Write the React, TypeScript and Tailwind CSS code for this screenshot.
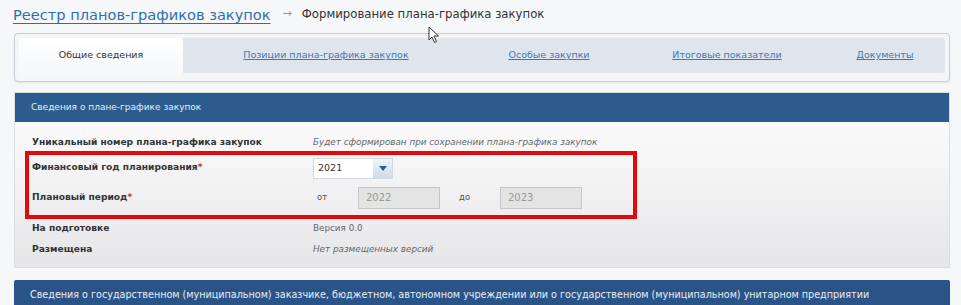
import React from 'react'

const font = { fontFamily: '"DejaVu Sans", Verdana, sans-serif' }

const tabs = [
  { label: 'Общие сведения', w: 'w-[164px]', active: true },
  { label: 'Позиции плана-графика закупок', w: 'w-[286px]' },
  { label: 'Особые закупки', w: 'w-[160px]' },
  { label: 'Итоговые показатели', w: 'w-[196px]' },
  { label: 'Документы', w: 'w-[120px]' },
]

function Cursor() {
  return (
    <svg className="absolute left-[428px] top-[26px]" width="13" height="18" viewBox="0 0 13 18">
      <path d="M1 1 L1 14 L4 11 L6.5 16.5 L8.5 15.5 L6 10 L10.5 10 Z" fill="#fff" stroke="#333" strokeWidth="1" strokeLinejoin="round" />
    </svg>
  )
}

function Row({ label, required, children, className = '' }: { label: string; required?: boolean; children?: React.ReactNode; className?: string }) {
  return (
    <div className={`grid grid-cols-[281px_1fr] items-center ${className}`}>
      <div className="text-[9.1px] font-bold text-[#333]">
        {label}
        {required && <span className="text-[#d22]">*</span>}
      </div>
      <div className="text-[8.8px] text-[#666]">{children}</div>
    </div>
  )
}

export default function App() {
  return (
    <div className="relative min-h-[305px] w-[961px] overflow-hidden bg-[#f6f7f8] pl-[14px] pr-[11px]" style={font}>
      <Cursor />
      {/* breadcrumbs */}
      <div className="flex h-[33px] items-center pb-[4px]">
        <a className="-ml-[1px] text-[14.6px] text-[#2f6db3] underline decoration-1 underline-offset-[3px]">Реестр планов-графиков закупок</a>
        <span className="ml-[12px] text-[11px] text-[#999]">→</span>
        <span className="ml-[10px] text-[11.7px] text-[#333]">Формирование плана-графика закупок</span>
      </div>

      {/* tabs */}
      <div className="rounded-[4px] border border-[#c7ced6] bg-[#f3f5f7] px-[4px] pt-[4px] pb-[8px] shadow-[0_1px_2px_rgba(0,0,0,0.08)]">
        <div className="flex h-[35px] rounded-[3px] bg-[#dfe5ec]">
          {tabs.map((t) => (
            <div
              key={t.label}
              className={`${t.w} flex items-center justify-center text-[9.5px] ${
                t.active
                  ? 'rounded-t-[3px] bg-gradient-to-b from-white to-[#f4f6f8] text-[#333] -mb-[8px] pb-[8px]'
                  : 'text-[#3b78c0] underline'
              }`}
            >
              {t.label}
            </div>
          ))}
        </div>
      </div>

      {/* plan section */}
      <div className="mt-[10px] border border-[#d9dde2]">
        <div className="flex h-[29px] items-center bg-[#2c5b8e] pl-[16px] text-[9px] text-[#e9eef5]">
          Сведения о плане-графике закупок
        </div>
        <div className="bg-gradient-to-b from-[#fbfbfc] to-[#e6e6e8] px-[10px] pt-[12px] pb-[7px]">
          <Row label="Уникальный номер плана-графика закупок" className="h-[17px] pl-[7px]">
            <i>Будет сформирован при сохранении плана-графика закупок</i>
          </Row>
          <div className="w-[612px] border-[4px] border-[#e3080c] pl-[3px] pt-[1px]">
            <Row label="Финансовый год планирования" required className="h-[24px]">
              <div className="flex h-[21px] w-[80px] border border-[#d4d8dd] bg-white">
                <span className="flex flex-1 items-center pl-[4px] text-[9.5px] text-[#333]">2021</span>
                <span className="flex w-[19px] items-center justify-center bg-gradient-to-b from-[#eef4fa] to-[#cddbe9]">
                  <svg width="8" height="5" viewBox="0 0 8 5"><path d="M0 0 H8 L4 5 Z" fill="#2c5b8e" /></svg>
                </span>
              </div>
            </Row>
            <Row label="Плановый период" required className="h-[35px]">
              <div className="flex items-center">
                <span className="ml-[4px] w-[41px] text-[8.5px] text-[#555]">от</span>
                <div className="flex h-[22px] w-[82px] items-center border border-[#c6c6c6] bg-[#e4e4e4] pl-[7px] text-[10px] text-[#999]">2022</div>
                <span className="ml-[19px] w-[41px] text-[8.5px] text-[#555]">до</span>
                <div className="flex h-[22px] w-[82px] items-center border border-[#c6c6c6] bg-[#e4e4e4] pl-[7px] text-[10px] text-[#999]">2023</div>
              </div>
            </Row>
          </div>
          <Row label="На подготовке" className="h-[20px] pl-[7px]">Версия 0.0</Row>
          <Row label="Размещена" className="h-[21px] pl-[7px]">
            <i>Нет размещенных версий</i>
          </Row>
        </div>
      </div>

      {/* customer section */}
      <div className="mt-[12px] flex h-[30px] items-center whitespace-nowrap rounded-t-[2px] bg-[#2a5487] pl-[16px] text-[9.6px] text-[#e9eef5]">
        Сведения о государственном (муниципальном) заказчике, бюджетном, автономном учреждении или о государственном (муниципальном) унитарном предприятии
      </div>
    </div>
  )
}
